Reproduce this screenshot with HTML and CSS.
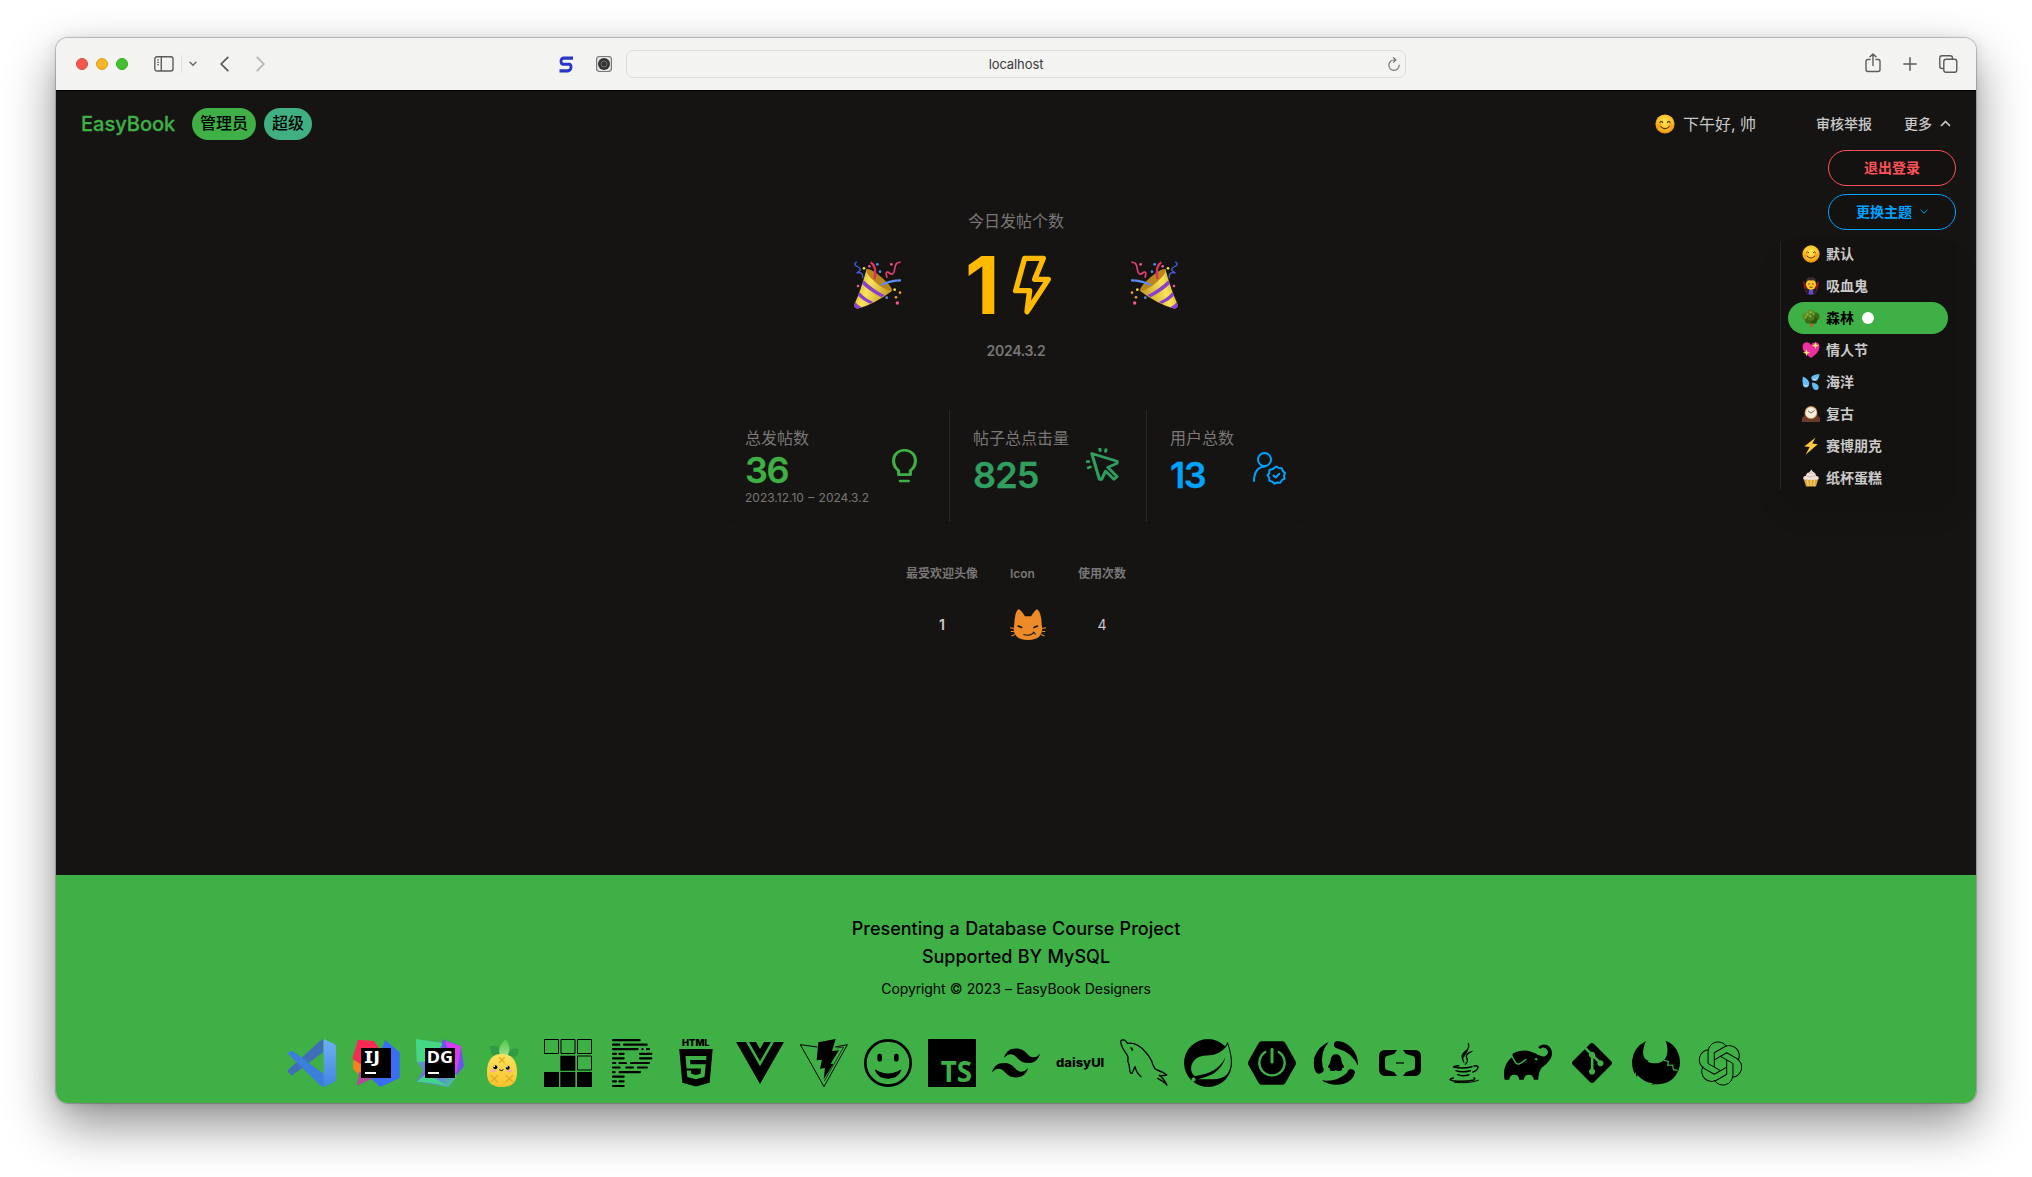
FILE: index.html
```html
<!DOCTYPE html>
<html lang="zh-CN">
<head>
<meta charset="utf-8">
<title>EasyBook</title>
<link rel="stylesheet" href="styles.css">
</head>
<body>
<svg class="defs" width="0" height="0" aria-hidden="true">
  <defs>
    <radialGradient id="face" cx=".5" cy=".4" r=".6"><stop offset="0" stop-color="#ffe94d"/><stop offset=".6" stop-color="#fdc42c"/><stop offset="1" stop-color="#e98a10"/></radialGradient>
    <linearGradient id="gold" x1="0" y1=".2" x2="1" y2=".6"><stop offset="0" stop-color="#c9a01c"/><stop offset=".4" stop-color="#fae45a"/><stop offset="1" stop-color="#c09a22"/></linearGradient>
    <linearGradient id="vs" x1="0" y1="0" x2="0" y2="1"><stop offset="0" stop-color="#6fb0f5"/><stop offset="1" stop-color="#3f86e0"/></linearGradient>
    <linearGradient id="dg" x1="0" y1="0" x2="1" y2="1"><stop offset="0" stop-color="#3fdc86"/><stop offset=".55" stop-color="#7a5cf5"/><stop offset="1" stop-color="#3bd68c"/></linearGradient>
    <linearGradient id="pine" x1="0" y1="0" x2="0" y2="1"><stop offset="0" stop-color="#fde35c"/><stop offset="1" stop-color="#f7c22e"/></linearGradient>
    <linearGradient id="leaf" x1="0" y1="0" x2="0" y2="1"><stop offset="0" stop-color="#4fc653"/><stop offset="1" stop-color="#a5e08a"/></linearGradient>
    <symbol id="smile" viewBox="0 0 20 20">
      <circle cx="10" cy="10" r="9.6" fill="url(#face)"/>
      <circle cx="4.5" cy="11.6" r="2.2" fill="#f58a2a" opacity=".6"/><circle cx="15.5" cy="11.6" r="2.2" fill="#f58a2a" opacity=".6"/>
      <path d="M4.8 8.6q1.4-2.4 2.9 0M12.3 8.6q1.4-2.4 2.9 0M5.8 12.6q4.2 4.2 8.4 0" fill="none" stroke="#6d3708" stroke-width="1.1" stroke-linecap="round"/>
    </symbol>
    <symbol id="popper" viewBox="0 0 144 144">
      <path d="M38 24L114 90Q60 130 14 142Q-2 144 2 128Q20 90 38 24Z" fill="url(#gold)"/>
      <path d="M29 58Q55 84 92 103L82 109Q48 92 25 70ZM17 94Q32 112 58 123L48 128Q26 119 12 104ZM4 124Q11 134 24 139L14 142Q-2 144 2 128Z" fill="#8a3fd0"/>
      <path d="M38 24Q52 22 84 50T114 90Q94 90 64 64T38 24Z" fill="#b8861d"/>
      <path d="M50 4Q68 14 62 54" fill="none" stroke="#e0305a" stroke-width="7"/>
      <path d="M82 72Q108 58 141 58" fill="none" stroke="#5b8cf5" stroke-width="7"/>
      <path d="M99 50Q92 26 106 36T122 24T140 4" fill="none" stroke="#e83e74" stroke-width="5"/>
      <path d="M8 2Q-4 12 12 18T8 36Q28 30 26 52" fill="none" stroke="#4260dc" stroke-width="4"/>
      <g fill="#4f8df5"><circle cx="70" cy="10" r="4"/><circle cx="78" cy="32" r="4"/><circle cx="98" cy="110" r="4"/></g>
      <g fill="#f25a92"><circle cx="46" cy="16" r="4"/><circle cx="112" cy="10" r="4"/><circle cx="12" cy="75" r="4"/><circle cx="130" cy="126" r="5"/></g>
      <g fill="#f0e040"><circle cx="30" cy="22" r="4"/><circle cx="122" cy="86" r="4"/></g>
      <g fill="#f29a3a"><circle cx="138" cy="95" r="4"/><circle cx="126" cy="109" r="4"/></g>
    </symbol>
  </defs>
</svg>

<div class="window">
  <header class="toolbar">
    <div class="tool-left">
      <span class="light red"></span><span class="light yellow"></span><span class="light green"></span>
      <svg class="i-side" width="20" height="16" viewBox="0 0 20 16" fill="none" stroke="#5c5c5a" stroke-width="1.4"><rect x=".8" y=".8" width="18.2" height="14.2" rx="2.2"/><path d="M7.3 1v14"/><path d="M3 4h2M3 6.400h2M3 8.800h2" stroke-width="1"/></svg>
      <span class="sep"></span>
      <svg class="i-down" width="8" height="6" viewBox="0 0 8 6" fill="none" stroke="#6b6b69" stroke-width="1.5" stroke-linecap="round"><path d="M1 1.300l3 3 3-3"/></svg>
      <svg class="i-back" width="9" height="16" viewBox="0 0 9 16" fill="none" stroke="#565654" stroke-width="1.700" stroke-linecap="round"><path d="M7.800 1.300L1.200 8l6.600 6.700"/></svg>
      <svg width="9" height="16" viewBox="0 0 9 16" fill="none" stroke="#b3b3b1" stroke-width="1.700" stroke-linecap="round"><path d="M1.200 1.300L7.800 8l-6.600 6.700"/></svg>
    </div>
    <div class="tool-mid">
      <svg width="14" height="17" viewBox="0 0 14 15" preserveAspectRatio="none" fill="none" stroke="#2736c8" stroke-width="2.800" stroke-linejoin="round"><path d="M14 1.900H5Q2 1.900 2 4.600T4.500 7.300H10Q12.300 7.300 12 10T9 13.100H.5"/></svg>
      <svg width="16" height="16" viewBox="0 0 16 16"><rect x=".5" y=".5" width="15" height="15" rx="3" fill="#e4e4e2" stroke="#777" stroke-width="1.200"/><circle cx="8" cy="8" r="6" fill="#333"/><circle cx="8" cy="8" r="3" fill="none" stroke="#888" stroke-width=".7"/></svg>
      <div class="url"><span>localhost</span>
        <svg width="14" height="15" viewBox="0 0 14 15" fill="none" stroke="#757573" stroke-width="1.200" stroke-linecap="round"><path d="M8.500 3H7a5.200 5.200 0 1 0 5.200 5.200M6.500.7L8.900 3 6.500 5.400"/></svg>
      </div>
    </div>
    <div class="tool-right">
      <svg width="16" height="20" viewBox="0 0 16 20" fill="none" stroke="#5c5c5a" stroke-width="1.400" stroke-linecap="round" stroke-linejoin="round"><path d="M5 6.500H3Q1 6.500 1 8.500v8Q1 18.500 3 18.500h10q2 0 2-2v-8q0-2-2-2h-2M8 12.500V1M5 3.800L8 .9l3 2.900"/></svg>
      <svg width="14" height="14" viewBox="0 0 14 14" stroke="#5c5c5a" stroke-width="1.500" stroke-linecap="round"><path d="M7 .8v12.400M.8 7h12.400"/></svg>
      <svg width="19" height="18" viewBox="0 0 19 18" fill="none" stroke="#5c5c5a" stroke-width="1.400"><rect x="4.800" y="4.300" width="13" height="13" rx="2.200"/><path d="M4.800 13.500H3Q.8 13.500.8 11.300V3Q.8.800 3 .8h8.300q2.200 0 2.200 2.200v1.300"/></svg>
    </div>
  </header>

  <main class="page">
    <nav class="navbar">
      <a class="brand">EasyBook</a>
      <span class="badge primary">管理员</span>
      <span class="badge teal">超级</span>
      <span class="greet"><svg width="20" height="20"><use href="#smile"/></svg>下午好, 帅</span>
      <a class="link">审核举报</a>
      <a class="link more">更多<svg width="11" height="7" viewBox="0 0 11 7" fill="none" stroke="#c9c9c9" stroke-width="1.700"><path d="M1 6l4.500-4.500L10 6"/></svg></a>
    </nav>

    <div class="menu">
      <button class="btn logout">退出登录</button>
      <button class="btn theme">更换主题<svg width="8" height="5" viewBox="0 0 8 5" fill="none" stroke="#00a3ff" stroke-width="1"><path d="M.5.800L4 4.200 7.500.8"/></svg></button>
      <ul class="themes">
        <li><svg viewBox="0 0 20 20"><use href="#smile"/></svg><span>默认</span></li>
        <li><svg viewBox="0 0 20 20"><path d="M1 4l4.500 5L8 19H5Q2 14 1 4zM19 4l-4.500 5L12 19h3q3-5 4-15z" fill="#8f1420"/><path d="M5 12l5 3 5-3 1.500 2-2 5.500h-9l-2-5.500z" fill="#22202a"/><path d="M8 14h4l.8 5.500H7.200z" fill="#6a45d8"/><ellipse cx="10" cy="8" rx="5.600" ry="6.300" fill="#fcc62d"/><path d="M4.400 6Q3.800.4 10 .4T15.600 6Q13.800 2.600 10 4 6.200 2.600 4.400 6z" fill="#3b2f2c"/><path d="M7 7.800h1.800M11.200 7.800H13M8.300 11.300h3.400" stroke="#6b3c10" stroke-width="1.100"/></svg><span>吸血鬼</span></li>
        <li class="active"><svg viewBox="0 0 20 20"><path d="M9 13h2.600l.6 6.800H8.800z" fill="#b0682c"/><circle cx="10" cy="5.500" r="5" fill="#5d8f22"/><circle cx="5" cy="8.500" r="4.600" fill="#5d8f22"/><circle cx="15" cy="8.500" r="4.600" fill="#3c6a16"/><circle cx="7.500" cy="12.500" r="4" fill="#3c6a16"/><circle cx="13" cy="12.700" r="3.800" fill="#2b5511"/><circle cx="10" cy="9" r="4" fill="#4b7d1c"/><g fill="#8db63a"><circle cx="6" cy="6" r="1.400"/><circle cx="9.500" cy="3.500" r="1.300"/><circle cx="4" cy="9.500" r="1.100"/><circle cx="9" cy="8" r="1.200"/><circle cx="13" cy="5.500" r="1.100"/></g></svg><span>森林</span><i class="dot"></i></li>
        <li><svg viewBox="0 0 20 20"><path d="M10 19Q1 13 .6 7 .6 1.500 5.500 1.500 8.500 1.500 10 4.500 11.500 1.500 14.500 1.500 19.400 1.500 19.400 7 19 13 10 19z" fill="#ee2fa0"/><path d="M15 1l1 3 3 1-3 1-1 3-1-3-3-1 3-1zM5 9l1 3 3 1-3 1-1 3-1-3-3-1 3-1z" fill="#fbe567"/></svg><span>情人节</span></li>
        <li><svg viewBox="0 0 20 20" fill="#63bdf4"><path d="M19.500 1Q18.500 9 14.500 9 10.500 9 10.200 5 11 1.500 19.500 1zM1 4q7 3 7 8-.3 4-3.700 4T1 12Q0 9 1 4zM11 10.500q7 1 7.500 5 0 3.600-3.200 3.500-4-.6-4.300-8.500z"/><path d="M2 13q2 3 4.500.5M12 7q3 2 5-2" stroke="#d9f2ff" fill="none"/></svg><span>海洋</span></li>
        <li><svg viewBox="0 0 20 20"><path d="M0 19v-5q3-1 3-5Q3 1 10 1t7 8q0 4 3 5v5z" fill="#6b3a2a"/><circle cx="10" cy="8.500" r="7" fill="#d3a867"/><circle cx="10" cy="8.500" r="6" fill="#f5efdc"/><path d="M6.500 6.500L10 9l4-3" stroke="#4a4038" stroke-width=".9" fill="none"/></svg><span>复古</span></li>
        <li><svg viewBox="0 0 20 20"><path d="M15 .5L2.500 10.500l6 .6L4 19.800 17.500 8l-6-.7z" fill="#ffc83a"/></svg><span>赛博朋克</span></li>
        <li><svg viewBox="0 0 20 20"><path d="M2 11h16L15.500 19.500h-11z" fill="#dda63b"/><path d="M6 12l1 7M10 12v7M14 12l-1 7" stroke="#f5d479" stroke-width="1.200"/><path d="M1.500 11.500Q.8 7.500 4.500 7.500 4.500 4 8 3.800L10.500.6Q11 3 13.500 4 15.500 5 15.500 7.500 19.200 8 18.500 11.500 10 13 1.500 11.500z" fill="#efe0d8"/><path d="M5 8q5 2 10-1M8 4.500q3 1.500 5-.5" stroke="#cdb5ad" fill="none"/></svg><span>纸杯蛋糕</span></li>
      </ul>
    </div>

    <section class="today">
      <svg class="popper" width="48" height="48"><use href="#popper"/></svg>
      <div class="today-main">
        <div class="label">今日发帖个数</div>
        <div class="today-num"><span>1</span>
          <svg width="38" height="60" viewBox="0 0 114 180" fill="none" stroke="#ffb900" stroke-width="16" stroke-linejoin="round"><path d="M35 10L91 10 65 73H106L42 170 50 107H8Z"/></svg>
        </div>
        <div class="today-date">2024.3.2</div>
      </div>
      <svg class="popper flip" width="48" height="48"><use href="#popper"/></svg>
    </section>

    <section class="stats">
      <div class="stat s1">
        <div><div class="label">总发帖数</div><div class="num">36</div><div class="desc">2023.12.10 – 2024.3.2</div></div>
        <svg width="25" height="34" viewBox="452 147 64 102" fill="none" stroke="#3eb045" stroke-width="8" preserveAspectRatio="none"><path d="M469 224V212Q456 200 456 183C456 140 512 140 512 183Q512 200 499 212V224ZM473 243H494" stroke-linecap="round" stroke-linejoin="round"/></svg>
      </div>
      <div class="stat s2">
        <div><div class="label">帖子总点击量</div><div class="num">825</div></div>
        <svg width="33" height="33" viewBox="955 144 86 97" fill="none" stroke="#2f9e5f" stroke-width="8" stroke-linejoin="round" preserveAspectRatio="none"><path d="M970 160L1036 183V189L1012 201L1036 228L1028 236L1006 212L996 236H990Z"/><path d="M991 147l1 5M1007 149l-1 5M958 184h4M961 202l5-2" stroke-linecap="round"/></svg>
      </div>
      <div class="stat s3">
        <div><div class="label">用户总数</div><div class="num">13</div></div>
        <svg width="33" height="34" viewBox="0 0 33 34" fill="none" stroke="#00a3ff" stroke-width="2" stroke-linecap="round" stroke-linejoin="round"><ellipse cx="11.500" cy="7.500" rx="6.500" ry="6.500"/><path d="M1 29C1 19 6 14.500 12 14.500"/><path d="M23.300 14.500l2.500 1.500 3 .2 1 2.700 2.200 2-1 2.800.5 3-2.700 1.500-1.500 2.500-3-.2-2.700 1.200-2.200-2-3-.9-.2-3-1.600-2.500 1.700-2.400.2-3 3-.8z"/><path d="M20.500 23.500l2.200 2 3.600-3.700"/></svg>
      </div>
    </section>

    <table class="rank">
      <thead><tr><th>最受欢迎头像</th><th class="c2">Icon</th><th>使用次数</th></tr></thead>
      <tbody><tr><td><b>1</b></td><td class="c2"><svg width="36" height="31" viewBox="758 632 94 91" preserveAspectRatio="none"><path d="M769 680Q770 640 780 633 784 631 797 653H813Q826 631 829 633 840 640 841 680 845 700 835 712 825 723 805 723 784 723 775 712 764 700 769 680Z" fill="#ec8b27"/><path d="M758 687l10 2M760 698h8M762 711l9-4M852 687l-10 2M850 698h-8M848 711l-9-4" stroke="#ec8b27" stroke-width="3"/><path d="M778 681l12 6M831 681l-12 6" stroke="#1b1612" stroke-width="5"/><path d="M793 707Q812 713 820 700l5 7" fill="none" stroke="#1b1612" stroke-width="3"/></svg></td><td>4</td></tr></tbody>
    </table>
  </main>

  <footer class="footer">
    <p class="lead">Presenting a Database Course Project<br>Supported BY MySQL</p>
    <p class="copy">Copyright © 2023 – EasyBook Designers</p>
    <div class="icons">
      <!-- VS Code -->
      <svg viewBox="54 57 144 144"><path d="M160 57V96L68 165Q62 167 54 156V150L150 63Z" fill="#3f6fb8"/><path d="M54 102V98L64 93H69L162 163V201Q154 200 150 196Z" fill="#3c7edb"/><path d="M161 57L192 71Q198 74 198 80V178Q198 184 192 187L161 201Z" fill="url(#vs)"/></svg>
      <!-- IntelliJ IDEA -->
      <svg viewBox="246 57 144 144"><path d="M250 120L274 130V170L262 160 249 146Z" fill="#f58220"/><path d="M264 59L312 63 330 88 300 150 247 116Z" fill="#f72a54"/><path d="M260 197L268 155 330 165Z" fill="#b24a98"/><path d="M345 60L389 97V174L331 201 304 176Z" fill="#3b6cf6"/><rect x="273" y="84" width="90" height="90"/><rect x="285" y="156" width="33" height="6" fill="#fff"/><text x="283" y="130" class="jb" textLength="48" lengthAdjust="spacingAndGlyphs">IJ</text></svg>
      <!-- DataGrip -->
      <svg viewBox="438 57 144 144"><path d="M438 58L520 68 560 170 536 201 440 185 460 150 440 125Z" fill="url(#dg)"/><path d="M438 58L520 70 475 125H441Z" fill="#44d882"/><path d="M440 185L470 160 530 196Z" fill="#3fd38c"/><path d="M518 58L572 78 582 138 560 165 515 80Z" fill="#6755ed"/><path d="M525 63L574 79 559 167Z" fill="#d83df0"/><rect x="465" y="84" width="90" height="90"/><rect x="474" y="156" width="33" height="6" fill="#fff"/><text x="470" y="130" class="jb" textLength="79" lengthAdjust="spacingAndGlyphs">DG</text></svg>
      <!-- Pinia -->
      <svg viewBox="630 57 144 144"><path d="M661 78Q690 72 700 106L672 112Q659 98 661 78ZM746 87Q722 80 706 106L738 112Q748 103 746 87Z" fill="#329a43"/><path d="M706 58Q728 85 710 110H692Q678 85 706 58Z" fill="url(#leaf)"/><path d="M695 102C740 102 741 145 741 158 741 190 722 201 696 201 668 201 651 190 651 158 651 145 652 102 695 102Z" fill="url(#pine)"/><path d="M687 112l17 17M704 112l-17 17M662 166l22 20M684 166l-22 20M707 166l22 20M729 166l-22 20" stroke="#e2ac26" stroke-width="4"/><circle cx="676" cy="142" r="6"/><circle cx="713" cy="143" r="6"/><circle cx="673" cy="139" r="2.500" fill="#fff"/><circle cx="711" cy="140" r="2.500" fill="#fff"/><ellipse cx="670" cy="152" rx="8" ry="4" fill="#f8a7b6"/><ellipse cx="719" cy="153" rx="8" ry="4" fill="#f8a7b6"/><path d="M688 149q6 6 12 0" fill="none" stroke="#000" stroke-width="3"/></svg>
      <!-- pnpm -->
      <svg viewBox="822 57 144 144"><g fill="none" stroke="#000" stroke-width="3"><path d="M823.500 58.500h42v42h-42zM873 58.500h42v42h-42zM922.500 58.500h42v42h-42zM922.500 108h42v42h-42z"/></g><path d="M871 107h45v45h-45zM822 156h45v45h-45zM871 156h45v45h-45zM921 156h45v45h-45z"/></svg>
      <!-- Prettier -->
      <svg viewBox="1014 57 144 144"><path d="M1029 60.500h80M1029 74h19M1062 74h68M1029 87.500h74M1117 87.500h1M1131 87.500h6M1029 101.500h9M1048 101.500h13M1110 101.500h34M1029 115h32M1110 115h34M1029 129h7M1048 129h20M1083 129h54M1029 142.500h20M1069 142.500h20M1104 142.500h27M1029 156.500h5M1049 156.500h61M1029 170h32M1029 184h9M1048 184h13M1029 198h32" stroke="#000" stroke-width="6.500" stroke-linecap="round"/></svg>
      <!-- HTML5 -->
      <svg viewBox="36 57 144 144"><text x="66" y="77" class="h5" textLength="83" lengthAdjust="spacingAndGlyphs">HTML</text><path transform="translate(50.500 87) scale(4.780 4.690)" d="M1.500 0h21l-1.910 21.563L11.977 24l-8.564-2.438L1.500 0zm7.031 9.750l-.232-2.718 10.059.003.23-2.622L5.412 4.410l.698 8.010h9.126l-.326 3.426-2.910.804-2.955-.81-.188-2.110H6.248l.33 4.171L12 19.351l5.379-1.443.744-8.157H8.531z"/></svg>
      <!-- Vue -->
      <svg viewBox="228 57 144 144"><path d="M228 66H258L300 139 342 66H372L300 192ZM267 66H288L300 87 312 66H333L300 124Z"/></svg>
      <!-- Vite -->
      <svg viewBox="420 57 144 144"><path d="M472 81L421 74 492 200 562 74 525 81" fill="none" stroke="#000" stroke-width="3" stroke-linejoin="round"/><path d="M551 81L530 84M551 81L493 183" fill="none" stroke="#000" stroke-width="2"/><path d="M475 67L527 57 516 93 537 91 512 131 520 132 491 178 495 144 480 146 486 119 470 121Z"/></svg>
      <!-- smile -->
      <svg viewBox="612 57 144 144"><circle cx="684" cy="129" r="68" fill="none" stroke="#000" stroke-width="8"/><rect x="652" y="101" width="14" height="24" rx="7"/><rect x="702" y="101" width="14" height="24" rx="7"/><path d="M647 151Q684 174 722 151 711 175 684 174 657 175 647 151Z" stroke="#000" stroke-width="4" stroke-linejoin="round"/></svg>
      <!-- TypeScript -->
      <svg viewBox="804 57 144 144"><rect x="804" y="57" width="144" height="144" rx="2"/><text x="842" y="186" class="ts" textLength="94" lengthAdjust="spacingAndGlyphs">TS</text></svg>
      <!-- Tailwind CSS -->
      <svg viewBox="0 0 24 24"><path d="M12.001,4.8c-3.200,0-5.200,1.600-6,4.800c1.200-1.600,2.600-2.200,4.200-1.800c0.913,0.228,1.565,0.890,2.288,1.624C13.666,10.618,15.027,12,18.001,12c3.200,0,5.200-1.600,6-4.800c-1.200,1.600-2.600,2.200-4.200,1.800c-0.913-0.228-1.565-0.890-2.288-1.624C16.337,6.182,14.976,4.800,12.001,4.800z M6.001,12c-3.200,0-5.200,1.600-6,4.800c1.200-1.600,2.600-2.200,4.200-1.800c0.913,0.228,1.565,0.890,2.288,1.624c1.177,1.194,2.538,2.576,5.512,2.576c3.200,0,5.200-1.600,6-4.800c-1.200,1.600-2.600,2.200-4.200,1.800c-0.913-0.228-1.565-0.890-2.288-1.624C10.337,13.382,8.976,12,6.001,12z"/></svg>
      <!-- daisyUI -->
      <svg viewBox="78 57 144 144"><text x="78" y="140" class="daisy" textLength="145" lengthAdjust="spacingAndGlyphs">daisyUI</text></svg>
      <!-- MySQL -->
      <svg viewBox="270 57 144 144" fill="none" stroke="#000" stroke-width="4" stroke-linejoin="round" stroke-linecap="round"><path d="M333 170Q320 160 315 140L306 160Q299 161 299 148T293 122Q297 110 286 97 276 84 273 71 269 57 283 60 289 63 292 70 322 66 346 96 362 112 369 134 374 148 382 150 401 157 410 165 400 168 388 166 400 174 411 195 398 182 383 175"/><path d="M303 84q3 0 4 6" stroke-width="5"/></svg>
      <!-- Spring -->
      <svg viewBox="0 0 24 24"><path d="M21.8537 1.4158a10.4504 10.4504 0 0 1-1.284 2.2471A11.9666 11.9666 0 1 0 3.8518 20.7757l.4445.3951a11.9543 11.9543 0 0 0 19.6316-8.2971c.3457-3.0126-.568-6.8649-2.0742-11.458zM5.5805 20.8745a1.0174 1.0174 0 1 1-.1482-1.4323 1.0396 1.0396 0 0 1 .1482 1.4323zm16.1991-3.5806c-2.9385 3.9263-9.2601 2.5928-13.2852 2.7904 0 0-.7161.0494-1.4323.1481 0 0 .2717-.1234.6174-.2469 2.8398-.9877 4.1732-1.1853 5.9018-2.0743 3.2349-1.6545 6.4698-5.2844 7.1118-9.0379-1.2347 3.6053-4.9881 6.7167-8.3959 7.9761-2.3459.8643-6.5685 1.7039-6.5685 1.7039l-.1729-.0988c-2.8645-1.4076-2.9632-7.6304 2.2718-9.6306 2.2966-.889 4.4696-.395 6.9637-.9877 2.6422-.6174 5.7045-2.5929 6.939-5.1857 1.3828 4.1732 3.062 10.643.0493 14.6434z"/></svg>
      <!-- Spring Boot -->
      <svg viewBox="654 57 144 144"><path d="M694 64H758Q763 64 766 69L796 122Q800 129 796 136L766 189Q763 194 758 194H694Q689 194 686 189L656 136Q652 129 656 122L686 69Q689 64 694 64Z"/><path d="M706 96A38 38 0 1 0 746 96" fill="none" stroke="#3eb045" stroke-width="7" stroke-linecap="round"/><path d="M726 88V126" stroke="#3eb045" stroke-width="9" stroke-linecap="round"/></svg>
      <!-- QQ swirl -->
      <svg viewBox="846 57 144 144"><path d="M896 66Q866 78 853 112 848 145 859 158 870 166 881 154 882 146 878 140 869 98 896 66ZM984 137Q985 105 963 82 941 62 920 63 910 66 912 78 915 85 924 86 964 96 984 137ZM875 181Q905 201 942 191 970 181 975 158 974 147 961 147 953 149 951 158 918 188 875 181Z"/><path d="M918 103Q932 103 934 120 934 127 941 137 944 146 936 143 938 152 929 153 918 153 918 149 917 154 905 153 897 151 900 143 892 146 895 137 902 127 902 120 904 103 918 103Z"/></svg>
      <!-- Alibaba Cloud -->
      <svg viewBox="1038 57 144 144"><path d="M1065 90H1101L1092 102 1074 107Q1065 108 1065 118V140Q1065 150 1074 151L1092 156 1101 168H1065Q1047 167 1047 148V110Q1047 91 1065 90ZM1155 90H1119L1128 102 1146 107Q1155 108 1155 118V140Q1155 150 1146 151L1128 156 1119 168H1155Q1173 167 1173 148V110Q1173 91 1155 90Z"/><path d="M1098 126h24v6h-24z" opacity=".6"/></svg>
      <!-- Java -->
      <svg viewBox="120 57 144 144"><path d="M205 69Q212 83 195 94 178 105 192 128 184 117 194 105 207 92 205 69ZM217 94Q191 100 202 116 205 123 196 134 206 124 200 115 193 106 217 94Z" stroke="#000" stroke-width="2.500"/><g fill="none" stroke="#000" stroke-width="4.500" stroke-linecap="round"><path d="M176 137Q154 140 164 142 190 147 216 140M168 152Q186 159 211 152M173 164Q188 170 207 164M222 138Q239 135 232 147 229 153 219 156M160 174Q142 178 158 182 195 186 221 180 227 177 222 174"/><path d="M163 187Q210 191 235 181" stroke-width="3"/></g></svg>
      <!-- Gradle -->
      <svg viewBox="0 0 24 24"><path transform="translate(0 -.400)" d="M22.695 4.297a3.807 3.807 0 0 0-5.290-.090.368.368 0 0 0 0 .533l.460.470a.363.363 0 0 0 .474.032 2.182 2.182 0 0 1 2.860 3.291c-3.023 3.020-7.056-5.447-16.211-1.083a1.240 1.240 0 0 0-.534 1.745l1.571 2.713a1.238 1.238 0 0 0 1.681.461l.037-.020-.029.020.688-.384a16.083 16.083 0 0 0 2.193-1.635.384.384 0 0 1 .499-.016.357.357 0 0 1 .016.534 16.435 16.435 0 0 1-2.316 1.741H8.770l-.696.390a1.958 1.958 0 0 1-.963.250 1.987 1.987 0 0 1-1.726-.989L3.900 9.696C1.060 11.720-.686 15.603.260 20.522a.363.363 0 0 0 .354.296h1.675a.363.363 0 0 0 .370-.331 2.478 2.478 0 0 1 4.915 0 .360.360 0 0 0 .357.317h1.638a.363.363 0 0 0 .357-.317 2.478 2.478 0 0 1 4.914 0 .363.363 0 0 0 .358.317h1.627a.363.363 0 0 0 .363-.357c.037-2.294.656-4.930 2.420-6.250 6.108-4.570 4.502-8.486 3.088-9.900zm-6.229 6.901l-1.165-.584a.730.730 0 1 1 1.165.587z"/></svg>
      <!-- Git -->
      <svg viewBox="-2.400 -2.400 28.800 28.800"><path d="M23.546 10.930L13.067.452c-.604-.603-1.582-.603-2.188 0L8.708 2.627l2.760 2.760c.645-.215 1.379-.070 1.889.441.516.515.658 1.258.438 1.900l2.658 2.660c.645-.223 1.387-.078 1.900.435.721.720.721 1.884 0 2.604-.719.719-1.881.719-2.600 0-.539-.541-.674-1.337-.404-1.996L12.860 8.955v6.525c.176.086.342.203.488.348.713.721.713 1.883 0 2.600-.719.721-1.889.721-2.609 0-.719-.719-.719-1.879 0-2.598.182-.180.387-.316.605-.406V8.835c-.217-.091-.424-.222-.600-.401-.545-.545-.676-1.342-.396-2.009L7.636 3.700.450 10.881c-.600.605-.600 1.584 0 2.189l10.480 10.477c.604.604 1.582.604 2.186 0l10.430-10.430c.605-.603.605-1.582 0-2.187"/></svg>
      <!-- Fox tail -->
      <svg viewBox="696 57 144 144"><path d="M738 63C728 85 723 116 746 122 741 125 744 125 751 128 795 138 812 105 797 62 825 72 841 100 840 129 839 156 820 184 793 190 776 195 766 191 753 195L759 190Q732 188 713 166L709 170Q706 160 708 156L703 162Q695 140 696 122 700 82 738 63Z"/><path d="M792 121l13 3-2 12 15-1 2 14 13 2" fill="none" stroke="#3eb045" stroke-width="3.500"/></svg>
      <!-- OpenAI -->
      <svg viewBox="888 57 144 144"><g transform="translate(961.500 130.500) scale(5.750) translate(-12 -12)" fill="none" stroke="#000" stroke-width=".5" stroke-linejoin="round">
        <path id="petal" d="M15.250 3.300A5.250 5.250 0 0 0 5.500 6.070V12L12 15.750"/>
        <use href="#petal" transform="rotate(60 12 12)"/><use href="#petal" transform="rotate(120 12 12)"/><use href="#petal" transform="rotate(180 12 12)"/><use href="#petal" transform="rotate(240 12 12)"/><use href="#petal" transform="rotate(300 12 12)"/></g></svg>
    </div>
  </footer>
</div>
</body>
</html>
```
FILE: styles.css
```css
* { box-sizing: border-box; margin: 0; padding: 0; }
body {
  width: 2032px; height: 1177px; overflow: hidden; background: #fff;
  padding: 38px 56px 0;
  font-family: Inter, "Noto Sans CJK SC", sans-serif; color: #c9c9c9;
}
svg { display: block; flex: none; }
.defs { position: absolute; }

.window {
  height: 1065px; display: flex; flex-direction: column;
  border-radius: 12px; overflow: hidden;
  box-shadow: 0 0 1px 1px rgba(0,0,0,.22), 0 22px 50px rgba(0,0,0,.44), 0 2px 14px rgba(0,0,0,.1);
}

/* browser toolbar */
.toolbar { height: 52px; flex: none; background: #f3f3f1; display: grid; grid-template-columns: 503px 847px 1fr; align-items: center; }
.tool-left { display: flex; align-items: center; padding-left: 20px; }
.light { width: 12px; height: 12px; border-radius: 50%; margin-right: 8px; }
.red { background: #f2564f; border: 1px solid #dc4840; }
.yellow { background: #f5b626; border: 1px solid #dba01c; }
.green { background: #43c02e; border: 1px solid #36a824; }
.i-side { margin-left: 18px; }
.sep { width: 1px; height: 18px; background: #dededc; margin-left: 7px; }
.i-down { margin-left: 7px; }
.i-back { margin: 0 27px 0 23px; }
.tool-mid { display: flex; align-items: center; }
.tool-mid > svg:first-child { margin-right: 23px; }
.url { width: 780px; height: 28px; margin-left: 14px; border: 1px solid #dcdcda; border-radius: 7px; display: flex; align-items: center; justify-content: center; position: relative; font-size: 13px; letter-spacing: -.1px; color: #3a3a3a; }
.url svg { position: absolute; right: 4px; top: 6px; }
.tool-right { display: flex; align-items: center; justify-content: flex-end; padding-right: 18px; gap: 22px; }
.tool-right svg:first-child { margin-top: -3px; }

.page { flex: 1; background: #161412; border-top: 1px solid #000; position: relative; display: flex; flex-direction: column; align-items: center; }
.navbar { align-self: stretch; height: 66px; display: flex; align-items: center; padding: 0 25px; }
.brand { font-size: 20px; font-weight: 500; color: #3eb045; letter-spacing: 0; width: 111px; -webkit-text-stroke: .3px; }
.badge { height: 32px; line-height: 31px; border-radius: 16px; padding: 0 8px; font-size: 16px; font-weight: 500; color: #000; margin-right: 8px; }
.primary { background: #3eb045; }
.teal { background: #40b083; }
.greet { display: flex; align-items: center; gap: 8px; margin-left: auto; font-size: 16px; line-height: 24px; padding-bottom: 1px; margin-right: 60px; }
.greet svg { margin-top: 1px; }
.link { font-size: 14px; font-weight: 500; margin-right: 32px; padding-bottom: 2px; }
.more { display: flex; align-items: center; gap: 8px; margin-right: 0; }
.more svg { margin-top: 1px; }

/* dropdown over the page */
.menu { position: absolute; right: 20px; top: 59px; width: 176px; display: flex; flex-direction: column; align-items: flex-end; gap: 8px; }
.btn { width: 128px; height: 36px; border-radius: 18px; background: #141210; font: inherit; font-size: 14px; font-weight: 700; padding-bottom: 2px; display: flex; align-items: center; justify-content: center; gap: 8px; }
.logout { color: #ff5257; border: 1px solid #ff5257; }
.theme { color: #00a3ff; border: 1px solid #00a3ff; }
.themes { list-style: none; width: 176px; padding-left: 8px; position: relative; font-size: 14px; font-weight: 700; background: #141210; border-radius: 16px; box-shadow: 0 20px 25px rgba(0,0,0,.1); }
.themes::before { content: ""; position: absolute; left: 0; top: 4px; bottom: 4px; width: 1px; background: #282624; }
.themes li { width: 160px; height: 32px; border-radius: 16px; display: flex; align-items: center; padding-left: 14px; gap: 6px; }
.themes svg { width: 18px; height: 18px; }
.themes span { padding-bottom: 2px; }
.themes .active { background: #3eb045; color: #000; }
.dot { width: 12px; height: 12px; border-radius: 50%; background: #fff; margin-left: 2px; }

.label { font-size: 16px; line-height: 24px; color: #797776; }
.today { display: flex; align-items: center; gap: 66px; margin-top: 52px; height: 152px; }
.popper { margin-top: -1px; }
.flip { transform: scaleX(-1); }
.today-main { width: 96px; display: flex; flex-direction: column; align-items: center; }
.today-num { height: 104px; display: flex; align-items: center; gap: 15px; color: #ffb900; font-size: 80px; line-height: 80px; font-weight: 700; align-self: stretch; }
.today-num span { width: 33px; margin-left: -3px; }
.today-date { margin-top: 4px; font-size: 14px; line-height: 20px; font-weight: 600; color: #797776; letter-spacing: -.3px; }

.stats { margin-top: 49px; height: 112px; width: 590px; display: flex; border-radius: 16px; box-shadow: 0 1px 2px rgba(0,0,0,.12); }
.stat { display: flex; justify-content: space-between; padding: 16px 32px 0 24px; }
.stat + .stat { border-left: 1px solid #2a2826; padding-left: 23px; }
.s1 { width: 228px; } .s2 { width: 197px; padding-right: 27px; } .s3 { width: 165px; padding-right: 25px; }
.num { font-size: 36px; font-weight: 600; line-height: 40px; letter-spacing: -1.4px; -webkit-text-stroke: .3px; }
.s1 .num { color: #3eb045; } .s2 .num { color: #2f9e5f; margin-top: 5px; letter-spacing: -.9px; } .s3 .num { color: #00a3ff; margin-top: 5px; }
.desc { font-size: 12px; line-height: 16px; color: #797776; white-space: nowrap; word-spacing: 1px; }
.s1 > svg { margin-top: 23px; } .s2 > svg { margin-top: 22px; } .s3 > svg { margin-top: 26px; }
.stat > div { width: 0; white-space: nowrap; }

.rank { margin-top: 32px; border-collapse: collapse; text-align: center; }
.rank th { font-size: 12px; line-height: 16px; font-weight: 700; color: #797776; padding: 12px 16px; height: 40px; }
.rank td { font-size: 14px; height: 62px; padding: 0 16px 1px; vertical-align: middle; }
.rank b { font-weight: 600; }
.rank .c2 { text-align: left; width: 68px; }
.rank th.c2 { font-weight: 600; }

.footer { height: 228px; flex: none; background: #3eb045; color: #000; display: flex; flex-direction: column; align-items: center; padding-top: 40px; text-align: center; }
.lead { font-size: 18px; line-height: 28px; font-weight: 500; word-spacing: .6px; }
.copy { font-size: 14px; line-height: 20px; margin-top: 8px; letter-spacing: -.1px; word-spacing: .4px; }
.icons { display: flex; gap: 16px; margin-top: 40px; }
.icons svg { width: 48px; height: 48px; overflow: visible; }
.jb { font: 700 50px "Noto Sans", sans-serif; fill: #fff; }
.h5 { font: 900 26px Inter, sans-serif; }
.ts { font: 700 86px "Open Sans", sans-serif; fill: #3eb045; }
.daisy { font: 800 36px Inter, sans-serif; }
```
